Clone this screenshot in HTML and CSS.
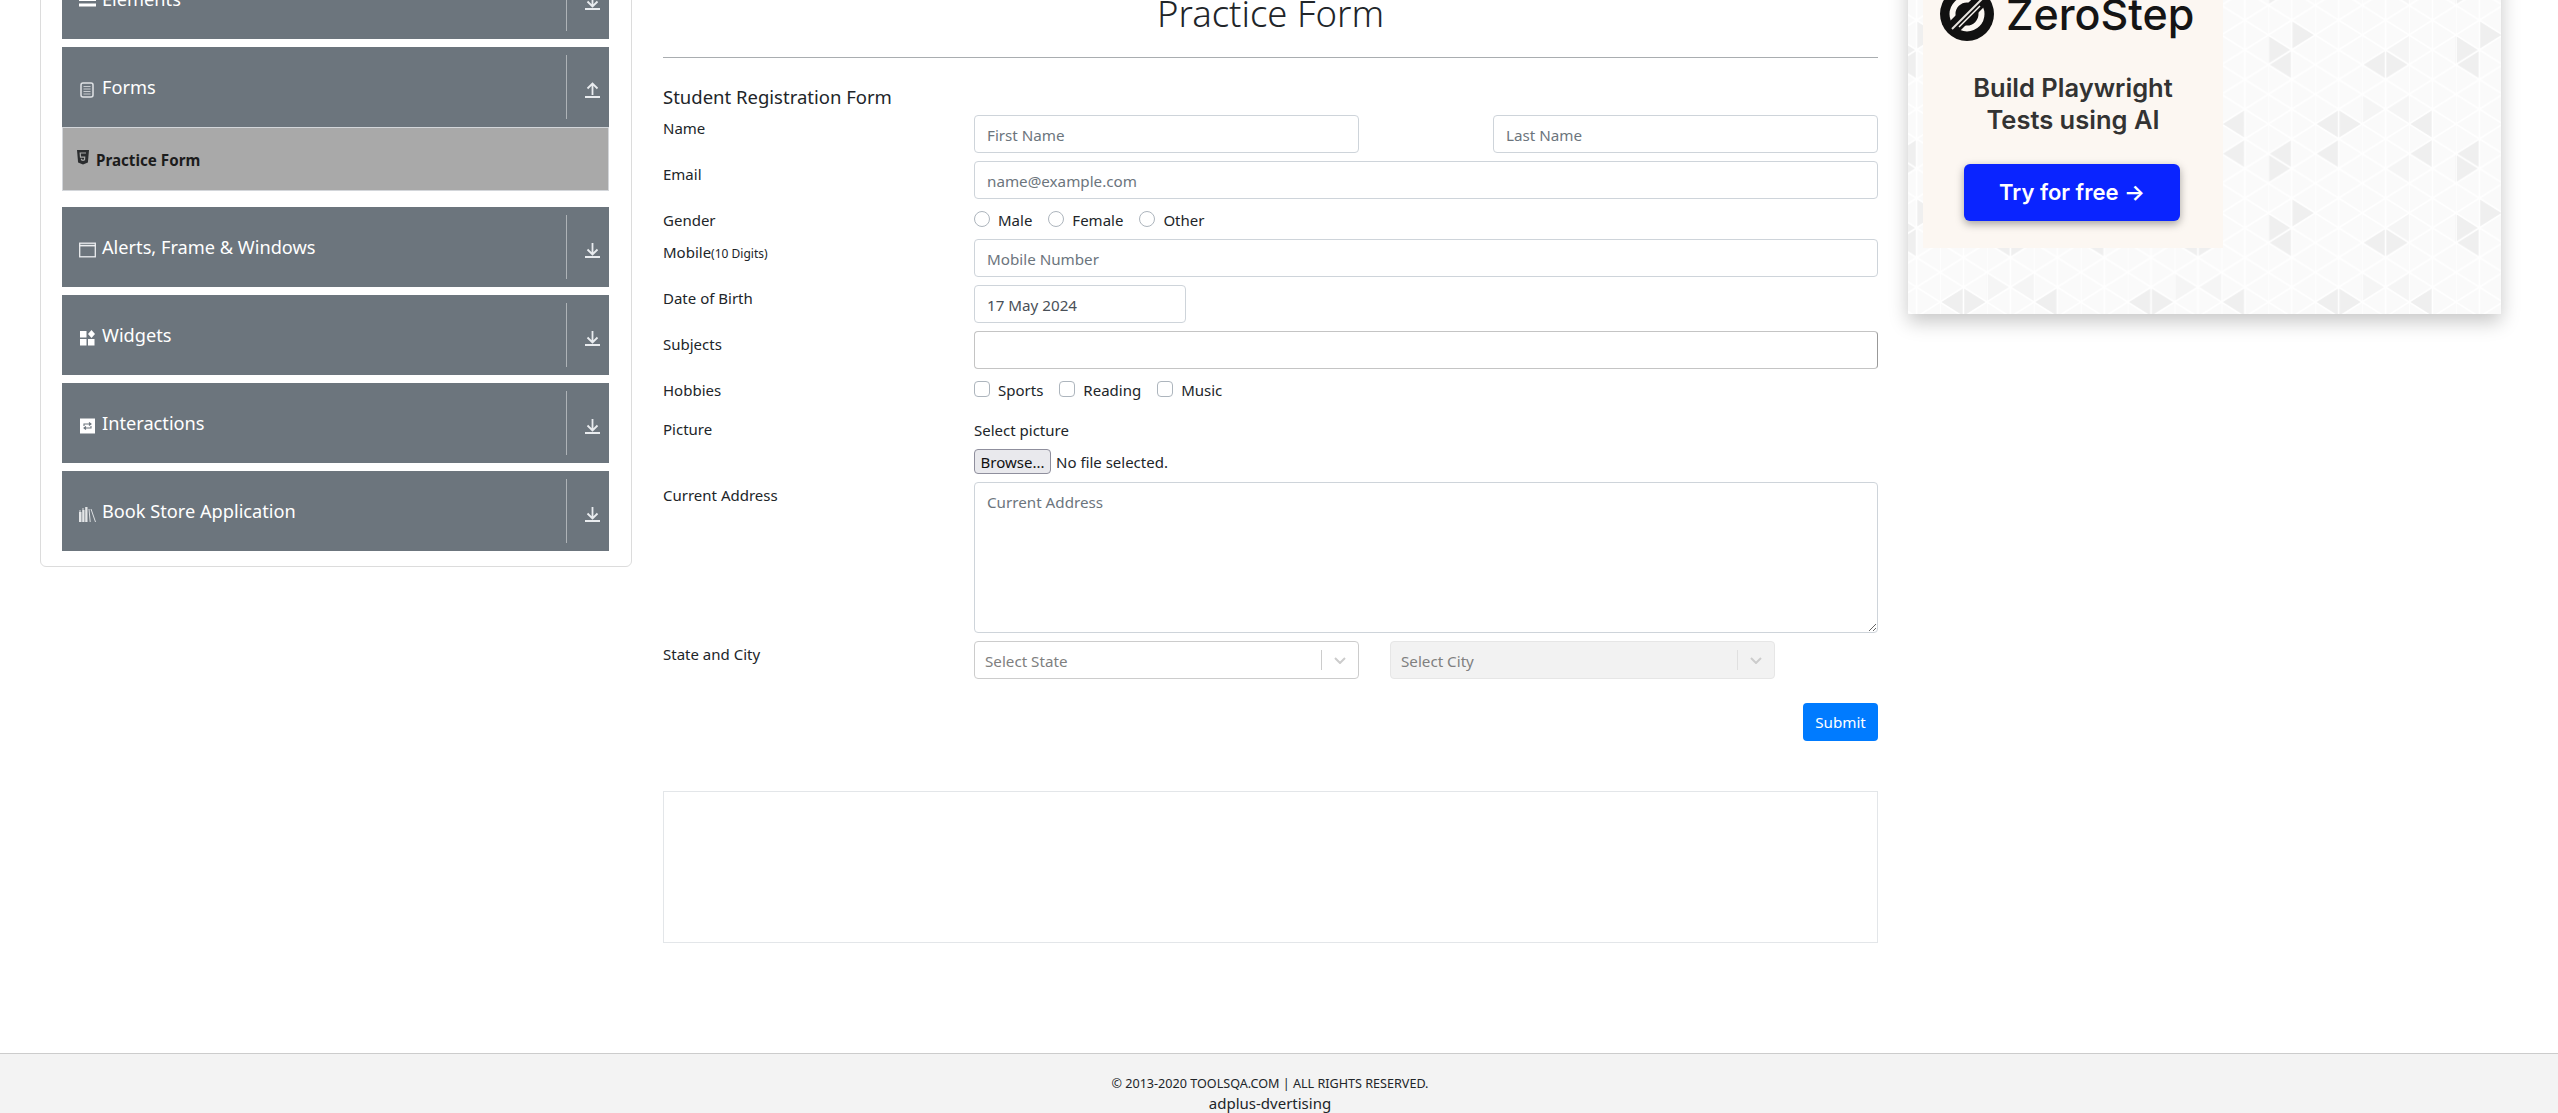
FILE: index.html
```html
<!DOCTYPE html>
<html lang="en">
<head>
  <meta charset="UTF-8">
  <title>Practice Form</title>
  <link rel="stylesheet" href="styles.css">
</head>
<body>
  <div class="page">
    <div class="columns">
      <aside class="sidebar">
        <div class="group">
          <div class="group-title">
            <svg class="group-icon" viewBox="0 0 17 16"><path d="M0 1h17v3H0zM0 7h17v3H0zM0 12.500h17v3H0z" fill="#fff"/></svg>
            <span>Elements</span>
          </div>
          <div class="group-toggle"><svg class="arrow" viewBox="0 0 15 16"><path d="M7.500 1v11M2.500 7.500l5 5 5-5M0 15h15" fill="none" stroke="#e9ecef" stroke-width="1.800"/></svg></div>
        </div>

        <div class="group group-open">
          <div class="group-title">
            <svg class="group-icon icon-low" viewBox="0 0 17 16"><rect x="2" y="1" width="12" height="14" rx="2" fill="none" stroke="#dfe2e5" stroke-width="1.500"/><path d="M4.500 4.500h7M4.500 7h7M4.500 9.500h7M4.500 12h7" stroke="#c6cace" stroke-width="1.200"/></svg>
            <span>Forms</span>
          </div>
          <div class="group-toggle"><svg class="arrow" viewBox="0 0 15 16"><path d="M7.500 13V2M2.500 6.500l5-5 5 5M0 15h15" fill="none" stroke="#e9ecef" stroke-width="1.800"/></svg></div>
        </div>
        <div class="submenu">
          <svg class="html5" viewBox="0 0 12 15"><path d="M0 0h12l-1.100 12.400L6 14.500 1.100 12.400z" fill="#2b2d2f"/><path d="M9 3H3.200l.3 4.200h4.200l-.2 2.600L6 10.400l-1.500-.6-.1-1" fill="none" stroke="#a9a9a9" stroke-width="1.200"/></svg>
          <span>Practice Form</span>
        </div>

        <div class="group">
          <div class="group-title">
            <svg class="group-icon icon-low" viewBox="0 0 17 16"><rect x=".7" y="1.200" width="15.600" height="13.600" fill="none" stroke="#eceef0" stroke-width="1.300"/><path d="M0 3.600h17" stroke="#eceef0" stroke-width="1.600"/></svg>
            <span>Alerts, Frame &amp; Windows</span>
          </div>
          <div class="group-toggle"><svg class="arrow" viewBox="0 0 15 16"><path d="M7.500 1v11M2.500 7.500l5 5 5-5M0 15h15" fill="none" stroke="#e9ecef" stroke-width="1.800"/></svg></div>
        </div>

        <div class="group">
          <div class="group-title">
            <svg class="group-icon icon-low" viewBox="0 0 17 16"><path d="M1 1h6.500v6.500H1zM1 9h6.500v6.500H1zM9 9h6.500v6.500H9zM12.500 0l3.500 4-3.500 4L9 4z" fill="#fff"/></svg>
            <span>Widgets</span>
          </div>
          <div class="group-toggle"><svg class="arrow" viewBox="0 0 15 16"><path d="M7.500 1v11M2.500 7.500l5 5 5-5M0 15h15" fill="none" stroke="#e9ecef" stroke-width="1.800"/></svg></div>
        </div>

        <div class="group">
          <div class="group-title">
            <svg class="group-icon icon-low" viewBox="0 0 17 16"><path d="M1 .5h15v15H1z" fill="#fff"/><path d="M5 8V6h6.500M10 4.500 12 6l-2 1.500M12 8v2H5.500M7 8.500 5 10l2 1.500" fill="none" stroke="#6c757d" stroke-width="1.100"/></svg>
            <span>Interactions</span>
          </div>
          <div class="group-toggle"><svg class="arrow" viewBox="0 0 15 16"><path d="M7.500 1v11M2.500 7.500l5 5 5-5M0 15h15" fill="none" stroke="#e9ecef" stroke-width="1.800"/></svg></div>
        </div>

        <div class="group">
          <div class="group-title">
            <svg class="group-icon icon-low" viewBox="0 0 17 16"><path d="M0 6h2.500v10H0zM3.200 4h2.300v12H3.200zM6.200 1h2.300v15H6.200z" fill="#e4e6e8"/><path d="M10 3l1.200 13M12 3l4.500 13M1 4v2M4 2v2" fill="none" stroke="#dcdfe2" stroke-width="1"/></svg>
            <span>Book Store Application</span>
          </div>
          <div class="group-toggle"><svg class="arrow" viewBox="0 0 15 16"><path d="M7.500 1v11M2.500 7.500l5 5 5-5M0 15h15" fill="none" stroke="#e9ecef" stroke-width="1.800"/></svg></div>
        </div>
      </aside>

      <main class="content">
        <h1 class="title">Practice Form</h1>
        <h5 class="form-title">Student Registration Form</h5>

        <form class="form">
          <div class="row">
            <label class="row-label">Name</label>
            <div class="row-body split">
              <input class="field half" type="text" placeholder="First Name">
              <input class="field half" type="text" placeholder="Last Name">
            </div>
          </div>
          <div class="row">
            <label class="row-label">Email</label>
            <div class="row-body"><input class="field" type="text" placeholder="name@example.com"></div>
          </div>
          <div class="row">
            <label class="row-label">Gender</label>
            <div class="row-body choices">
              <span class="choice"><i class="mark radio"></i>Male</span>
              <span class="choice"><i class="mark radio"></i>Female</span>
              <span class="choice"><i class="mark radio"></i>Other</span>
            </div>
          </div>
          <div class="row">
            <label class="row-label">Mobile<small>(10 Digits)</small></label>
            <div class="row-body"><input class="field" type="text" placeholder="Mobile Number"></div>
          </div>
          <div class="row">
            <label class="row-label">Date of Birth</label>
            <div class="row-body"><input class="field date" type="text" value="17 May 2024"></div>
          </div>
          <div class="row">
            <label class="row-label">Subjects</label>
            <div class="row-body"><input class="field subjects" type="text"></div>
          </div>
          <div class="row row-hobbies">
            <label class="row-label">Hobbies</label>
            <div class="row-body choices">
              <span class="choice"><i class="mark"></i>Sports</span>
              <span class="choice"><i class="mark"></i>Reading</span>
              <span class="choice"><i class="mark"></i>Music</span>
            </div>
          </div>
          <div class="row row-picture">
            <label class="row-label">Picture</label>
            <div class="row-body">
              <div class="select-picture">Select picture</div>
              <div class="file"><button class="browse" type="button">Browse...</button><span>No file selected.</span></div>
            </div>
          </div>
          <div class="row">
            <label class="row-label">Current Address</label>
            <div class="row-body"><textarea class="field area" placeholder="Current Address"></textarea></div>
          </div>
          <div class="row">
            <label class="row-label">State and City</label>
            <div class="row-body selects">
              <div class="select"><span>Select State</span><b class="select-sep"></b><svg class="chevron" viewBox="0 0 12 7"><path d="M1 1l5 5 5-5" fill="none" stroke="#ccc" stroke-width="2"/></svg></div>
              <div class="select disabled"><span>Select City</span><b class="select-sep"></b><svg class="chevron" viewBox="0 0 12 7"><path d="M1 1l5 5 5-5" fill="none" stroke="#ccc" stroke-width="2"/></svg></div>
            </div>
          </div>
          <div class="submit-row"><button class="submit" type="button">Submit</button></div>
        </form>

        <div class="empty-box"></div>
      </main>

      <aside class="ad">
        <svg class="ad-pattern" width="100%" height="100%">
          <defs>
            <pattern id="lattice" x="28.330" y="5.330" width="46.900" height="29.670" patternUnits="userSpaceOnUse" patternTransform="translate(332 90)">
              <path d="M0 0v29.670M23.450 0v29.670M0 0l23.450 14.830L46.900 0M0 29.670l23.450-14.840 23.450 14.840" fill="none" stroke="#fff" stroke-width="1.500"/>
            </pattern>
            <pattern id="shade" x="20" y="5.330" width="187.600" height="178" patternUnits="userSpaceOnUse" patternTransform="translate(332 90)">
              <g transform="translate(-20 -5.330)">
                <g fill="#efefef">
                  <path d="M51.780 20v29.670L75.230 35z"/>
                  <path d="M28.330 35v29.670l23.450-15z"/>
                  <path d="M51.780 49.670v29.660L28.330 64.670z"/>
                  <path d="M145.580 49.670v29.660l-23.450-14.660z"/>
                  <path d="M145.580 49.670v29.660l23.450-14.660z"/>
                  <path d="M98.680 109v29.670L75.230 124z"/>
                  <path d="M98.680 109v29.670L122.130 124z"/>
                  <path d="M192.480 109v29.670L169.030 124z"/>
                  <path d="M51.780 138.670v29.660l-23.450-14.660z"/>
                  <path d="M98.680 138.670v29.660l-23.450-14.660z"/>
                  <path d="M192.480 138.670v29.660l-23.450-14.660z"/>
                  <path d="M28.330 153.670v29.660l23.450-15z"/>
                </g>
                <g fill="#f5f5f5">
                  <path d="M169.030 35v29.670l-23.450-15z"/>
                  <path d="M122.130 94.330V124l23.450-15z"/>
                  <path d="M169.030 94.330V124l-23.450-15z"/>
                  <path d="M169.030 153.670v29.660l-23.450-15z"/>
                </g>
              </g>
            </pattern>
          </defs>
          <rect width="100%" height="100%" fill="#fafafa"/>
          <rect width="100%" height="100%" fill="url(#shade)"/>
          <rect width="100%" height="100%" fill="url(#lattice)"/>
        </svg>
        <div class="ad-card">
          <div class="ad-logo">
            <svg class="ad-mark" viewBox="0 0 54 54">
              <circle cx="27" cy="27" r="27" fill="#111"/>
              <circle cx="27" cy="27" r="14.500" fill="none" stroke="#fbf7f2" stroke-width="6"/>
              <path d="M10 44 44 10" stroke="#111" stroke-width="14"/>
              <path d="M12 42 42 12" stroke="#e8e4df" stroke-width="2"/>
              <path d="M19 40 40 19" stroke="#fbf7f2" stroke-width="1.500"/>
            </svg>
            <span class="ad-brand">ZeroStep</span>
          </div>
          <div class="ad-head">Build Playwright<br>Tests using AI</div>
          <div class="ad-button">Try for free →</div>
        </div>
      </aside>
    </div>

    <footer class="footer">
      <div class="copy">© 2013-2020 TOOLSQA.COM | ALL RIGHTS RESERVED.</div>
      <div class="adplus">adplus-dvertising</div>
    </footer>
  </div>
</body>
</html>
```

FILE: styles.css
```css
html, body {
  height: 100%;
  margin: 0;
  overflow: hidden;
  background: #fff;
}
body {
  font-family: "Noto Sans", "Open Sans", sans-serif;
  font-size: 15px;
  line-height: 24px;
  color: #212529;
}

/* the page is scrolled down a little in the picture */
.page {
  height: 1203px;
  margin-top: -90px;
  display: flex;
  flex-direction: column;
}
.columns {
  flex: 1;
  display: grid;
  grid-template-columns: 593px 1215px 593px;
  column-gap: 30px;
  align-items: start;
  padding-left: 40px;
}

/* sidebar */
.sidebar {
  margin: 28px 1px 0 0;
  padding: 20px 22px 15px 21px;
  border: 1px solid #dcdcdc;
  border-radius: 6px;
}
.group {
  height: 80px;
  margin-bottom: 8px;
  display: flex;
  align-items: center;
  background: #6c757d;
  color: #fff;
  font-size: 18.200px;
}
.group:last-child {
  margin-bottom: 0;
}
.group-open {
  margin-bottom: 0;
}
.group-title {
  flex: 1;
  display: flex;
  align-items: center;
  gap: 6px;
  padding-left: 17px;
}
.group-icon {
  width: 17px;
  height: 16px;
  flex: none;
}
.icon-low {
  margin-top: 5px;
}
.group-toggle {
  width: 43px;
  height: 64px;
  display: flex;
  align-items: center;
  padding-left: 18px;
  box-sizing: border-box;
  border-left: 1px solid rgba(255, 255, 255, 0.45);
}
.arrow {
  width: 15px;
  height: 16px;
  margin-top: 6px;
}
.submenu {
  height: 64px;
  margin-bottom: 16px;
  display: flex;
  align-items: center;
  gap: 7px;
  padding-left: 14px;
  box-sizing: border-box;
  background: #a9a9a9;
  border: 1px solid #d3d6da;
  font-size: 15.200px;
  font-weight: 700;
  color: #1c1c1c;
}
.submenu span {
  padding-top: 2px;
}
.html5 {
  width: 12px;
  height: 15px;
  margin-top: -4px;
}

/* main column */
.title {
  height: 148px;
  margin: 0;
  display: flex;
  align-items: flex-end;
  justify-content: center;
  padding-bottom: 6px;
  box-sizing: border-box;
  border-bottom: 1px solid #a9adb0;
  font-size: 36.500px;
  line-height: 76px;
  font-weight: 300;
  color: #212529;
}
.form-title {
  height: 57px;
  margin: 0;
  padding-top: 26px;
  box-sizing: border-box;
  font-size: 18.500px;
  font-weight: 400;
  line-height: 26px;
}
.row {
  display: flex;
  margin-bottom: 8px;
}
.row-label {
  width: 311px;
  height: 24px;
  flex: none;
  padding-top: 1px;
  box-sizing: border-box;
}
.row-label small {
  font-size: 12px;
}
.row-body {
  flex: 1;
  min-width: 0;
}
.row-hobbies {
  margin-bottom: 15px;
}
.split {
  display: flex;
  justify-content: space-between;
}
.field {
  display: block;
  width: 100%;
  height: 38px;
  padding: 2px 12px 0;
  box-sizing: border-box;
  background: #fff;
  border: 1px solid #ced4da;
  border-radius: 4px;
  font-family: inherit;
  font-size: 15.200px;
  color: #495057;
  outline: none;
}
.field::placeholder {
  color: #6c757d;
  opacity: 1;
}
.half {
  width: 385px;
}
.date {
  width: 212px;
}
.subjects {
  border-color: #c4c4c4;
  border-right-color: #999;
}
.area {
  height: 151px;
  padding-top: 9px;
  line-height: 21px;
}
.choices {
  display: flex;
  padding-top: 2px;
  height: 24px;
  box-sizing: border-box;
}
.choice {
  display: flex;
  align-items: center;
  margin-right: 16px;
}
.mark {
  width: 16px;
  height: 16px;
  margin: -2px 8px 0 0;
  box-sizing: border-box;
  border: 1px solid #adb5bd;
  border-radius: 4px;
  background: #fff;
}
.radio {
  border-radius: 50%;
}
.select-picture {
  padding-top: 2px;
}
.file {
  display: flex;
  align-items: center;
  gap: 5px;
  margin-top: 7px;
}
.browse {
  width: 77px;
  height: 25px;
  padding: 0;
  background: #e9e9ed;
  border: 1px solid #8f8f9d;
  border-radius: 4px;
  font-family: inherit;
  font-size: 15px;
  color: #111;
}
.selects {
  display: flex;
  gap: 31px;
}
.select {
  width: 385px;
  height: 38px;
  display: flex;
  align-items: center;
  padding: 0 7px 0 10px;
  box-sizing: border-box;
  background: #fff;
  border: 1px solid #ccc;
  border-radius: 4px;
  font-size: 15.200px;
  color: #808080;
}
.select span {
  flex: 1;
  padding-top: 2px;
}
.select-sep {
  width: 1px;
  height: 20px;
  background: #ccc;
}
.chevron {
  width: 12px;
  height: 7px;
  margin: 0 5px 0 12px;
}
.disabled {
  background: #f2f2f2;
  border-color: #e6e6e6;
}
.disabled .select-sep {
  background: #e0e0e0;
}
.submit-row {
  display: flex;
  justify-content: flex-end;
  margin-top: 24px;
}
.submit {
  width: 75px;
  height: 38px;
  padding: 0;
  background: #007bff;
  border: none;
  border-radius: 4px;
  font-family: inherit;
  font-size: 15.200px;
  color: #fff;
}
.empty-box {
  height: 152px;
  margin-top: 50px;
  box-sizing: border-box;
  border: 1px solid #e3e6e9;
}

/* advert */
.ad {
  position: relative;
  height: 404px;
  padding: 48px 0 0 15px;
  box-sizing: border-box;
  box-shadow: 0 8px 18px rgba(0, 0, 0, 0.22);
}
.ad-pattern {
  position: absolute;
  left: 0;
  top: 0;
}
.ad-card {
  position: relative;
  width: 300px;
  height: 290px;
  padding-top: 29px;
  box-sizing: border-box;
  background: #fcf7f2;
  font-family: Inter, "Noto Sans", sans-serif;
}
.ad-logo {
  display: flex;
  align-items: center;
  gap: 12px;
  padding-left: 17px;
}
.ad-mark {
  width: 54px;
  height: 54px;
  flex: none;
}
.ad-brand {
  font-size: 43px;
  line-height: 54px;
  font-weight: 500;
  color: #151515;
}
.ad-head {
  margin-top: 31px;
  text-align: center;
  font-size: 25.500px;
  line-height: 32px;
  font-weight: 600;
  color: #333;
}
.ad-button {
  width: 216px;
  height: 57px;
  margin: 28px 0 0 41px;
  padding-bottom: 2px;
  box-sizing: border-box;
  display: flex;
  align-items: center;
  justify-content: center;
  background: #0a24ff;
  border-radius: 6px;
  box-shadow: 0 3px 8px rgba(0, 0, 0, 0.35);
  font-size: 22px;
  font-weight: 600;
  color: #fff;
}

/* footer */
.footer {
  height: 60px;
  padding: 20px 18px 0 0;
  box-sizing: border-box;
  overflow: hidden;
  background: #f3f3f3;
  border-top: 1px solid #ccc;
  text-align: center;
}
.copy {
  font-size: 12.600px;
  line-height: 20px;
}
.adplus {
  font-size: 15px;
  line-height: 19px;
}
```
